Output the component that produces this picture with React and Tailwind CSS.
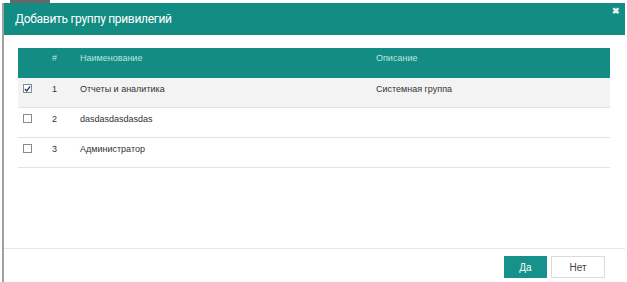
import React from "react";

const rows = [
  { id: 1, name: "Отчеты и аналитика", desc: "Системная группа", checked: true },
  { id: 2, name: "dasdasdasdasdas", desc: "", checked: false },
  { id: 3, name: "Администратор", desc: "", checked: false },
];

function Checkbox({ checked }) {
  return (
    <span className="flex h-[9px] w-[9px] items-center justify-center border border-[#8a8a8a] bg-white">
      {checked && (
        <svg width="8" height="8" viewBox="0 0 8 8">
          <path d="M1 4 L3.2 6.3 L7 1" fill="none" stroke="#1f3f8f" strokeWidth="1.6" />
        </svg>
      )}
    </span>
  );
}

export default function App() {
  return (
    <div className="h-[282px] w-[627px] overflow-hidden bg-white font-['Liberation_Sans',Arial,sans-serif]">
      <div className="h-[3px] w-[627px] flex">
        <div className="ml-[10px] h-[3px] w-[40px] bg-[#666]" />
      </div>
      <div className="flex h-[279px] flex-col border-l-2 border-[#a0a0a0] ml-[2px] w-[623px]">
        <div className="relative flex h-[32px] shrink-0 items-center bg-[#138c83] pl-[11px] font-['Roboto',sans-serif] text-[12px] tracking-[-0.3px] text-white">
          Добавить группу привилегий
          <span className="absolute right-[5px] top-[4px] text-[9px] font-bold leading-none text-[#e6f4f2]">✖</span>
        </div>

        <div className="flex-1 px-[14px] pt-[13px]">
          <div className="w-[592px] text-[9px]">
            <div className="flex h-[30px] bg-[#138c83] pt-[4px] text-[#bfe3df]">
              <div className="w-[34px]" />
              <div className="w-[28px]">#</div>
              <div className="w-[296px]">Наименование</div>
              <div>Описание</div>
            </div>
            {rows.map((r) => (
              <div
                key={r.id}
                className={`flex h-[30px] items-start border-b border-[#e2e2e2] pt-[5px] text-[#333] ${
                  r.checked ? "bg-[#f3f3f3]" : "bg-white"
                }`}
              >
                <div className="w-[34px] pl-[5px] pt-[1px]">
                  <Checkbox checked={r.checked} />
                </div>
                <div className="w-[28px]">{r.id}</div>
                <div className="w-[296px]">{r.name}</div>
                <div>{r.desc}</div>
              </div>
            ))}
          </div>
        </div>

        <div className="flex h-[34px] shrink-0 items-start justify-end gap-[4px] border-t border-[#e6e6e6] pr-[20px] pt-[7px] text-[10px]">
          <button className="h-[22px] w-[43px] bg-[#17928a] text-white">Да</button>
          <button className="h-[22px] w-[54px] border border-[#dcdcdc] bg-white text-[#444]">Нет</button>
        </div>
      </div>
    </div>
  );
}
